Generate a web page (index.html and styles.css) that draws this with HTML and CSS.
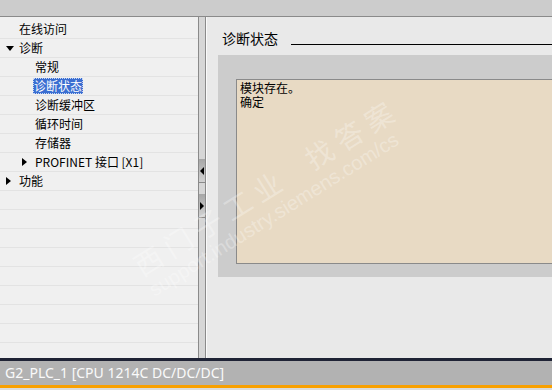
FILE: index.html
```html
<!DOCTYPE html>
<html lang="zh-cn">
<head>
    <meta charset="UTF-8">
    <title>诊断状态</title>
    <link rel="stylesheet" href="styles.css">
</head>
<body>
    <div class="topbar"></div>

    <div class="main">
        <ul class="tree">
            <li class="row lvl0"><span class="tog"></span><span class="lbl">在线访问</span></li>
            <li class="row lvl0"><span class="tog"><span class="tri-down"></span></span><span class="lbl">诊断</span></li>
            <li class="row lvl1"><span class="tog"></span><span class="lbl">常规</span></li>
            <li class="row lvl1"><span class="tog"></span><span class="lbl selected">诊断状态</span></li>
            <li class="row lvl1"><span class="tog"></span><span class="lbl">诊断缓冲区</span></li>
            <li class="row lvl1"><span class="tog"></span><span class="lbl">循环时间</span></li>
            <li class="row lvl1"><span class="tog"></span><span class="lbl">存储器</span></li>
            <li class="row lvl1"><span class="tog"><span class="tri-right"></span></span><span class="lbl">PROFINET 接口 [X1]</span></li>
            <li class="row lvl0"><span class="tog"><span class="tri-right"></span></span><span class="lbl">功能</span></li>
            <li class="row"></li>
            <li class="row"></li>
            <li class="row"></li>
            <li class="row"></li>
            <li class="row"></li>
            <li class="row"></li>
            <li class="row"></li>
            <li class="row"></li>
        </ul>

        <div class="splitter">
            <div class="split-btn"><span class="arr-left"></span></div>
            <div class="split-btn"><span class="arr-right"></span></div>
        </div>

        <div class="content">
            <div class="section-head">
                <span class="section-title">诊断状态</span>
                <div class="rule"></div>
            </div>
            <div class="status-frame">
                <div class="status-box">
                    <p>模块存在。</p>
                    <p>确定</p>
                </div>
            </div>
        </div>

        <div class="watermark">
            <div class="wm-cn">西门子工业&nbsp;&nbsp;找答案</div>
            <div class="wm-url">support.industry.siemens.com/cs</div>
        </div>
    </div>

    <div class="statusbar">
        <div class="statusbar-text">G2_PLC_1 [CPU 1214C DC/DC/DC]</div>
    </div>
</body>
</html>
```

FILE: styles.css
```css
body {
    margin: 0;
    width: 552px;
    height: 390px;
    overflow: hidden;
    font-family: "Noto Sans CJK SC", "Liberation Sans", sans-serif;
    font-size: 12px;
    color: #000;
    background: #dcdcdc;
}

.topbar {
    height: 16px;
    background: #cccccc;
    border-bottom: 1px solid #8a8a8a;
}

.main {
    position: relative;
    display: flex;
    height: 341px;
    overflow: hidden;
}

/* tree on the left */
.tree {
    list-style: none;
    margin: 0;
    padding: 3px 0 0 0;
    width: 198px;
    background: #f0f0f0;
    overflow: hidden;
}

.row {
    display: flex;
    align-items: center;
    height: 18px;
    border-bottom: 1px solid #e3e3e3;
    white-space: nowrap;
}

.lvl0 {
    padding-left: 3px;
}

.lvl1 {
    padding-left: 19px;
}

.tog {
    width: 16px;
    display: flex;
    align-items: center;
    justify-content: flex-start;
}

.tri-down {
    margin-left: 3px;
    width: 0;
    height: 0;
    border-left: 4px solid transparent;
    border-right: 4px solid transparent;
    border-top: 5px solid #000;
}

.tri-right {
    margin-left: 3px;
    width: 0;
    height: 0;
    border-top: 4px solid transparent;
    border-bottom: 4px solid transparent;
    border-left: 5px solid #000;
}

.lbl {
    line-height: 16px;
}

.selected {
    background: #3a6ed1;
    color: #fff;
    margin-left: -2px;
    padding: 0 1px;
    outline: 1px dotted #c8d6f2;
    outline-offset: -1px;
}

/* splitter */
.splitter {
    width: 6px;
    background: #d6d6d6;
    border-left: 1px solid #8a8a8a;
    border-right: 1px solid #8a8a8a;
    display: flex;
    flex-direction: column;
    padding-top: 142px;
    gap: 11px;
}

.split-btn {
    height: 23px;
    background: linear-gradient(#a6a6a6, #d2d2d2);
    border-bottom: 1px solid #8a8a8a;
    display: flex;
    align-items: center;
    justify-content: center;
}

.arr-left {
    width: 0;
    height: 0;
    border-top: 4px solid transparent;
    border-bottom: 4px solid transparent;
    border-right: 4px solid #000;
}

.arr-right {
    width: 0;
    height: 0;
    border-top: 4px solid transparent;
    border-bottom: 4px solid transparent;
    border-left: 4px solid #000;
}

/* right side */
.content {
    flex: 1;
    background: #e9e9e9;
    border-left: 1px solid #fafafa;
}

.section-head {
    display: flex;
    align-items: flex-end;
    height: 16px;
    margin-top: 13px;
    padding-left: 15px;
}

.section-title {
    font-size: 14px;
    line-height: 16px;
    padding-right: 13px;
}

.rule {
    flex: 1;
    height: 1px;
    background: #000;
    margin-bottom: 1px;
}

.status-frame {
    box-sizing: border-box;
    margin: 9px 0 0 11px;
    height: 222px;
    padding: 24px 0 13px 18px;
    background: #cccccc;
}

.status-box {
    height: 100%;
    box-sizing: border-box;
    background: #e8dac4;
    border: 1px solid #8a8a8a;
    border-right: none;
    padding: 1px 3px;
}

.status-box p {
    margin: 0;
    line-height: 14px;
}

/* faint watermark over everything */
.watermark {
    position: absolute;
    left: 127px;
    top: 236px;
    transform: rotate(-32deg);
    transform-origin: left top;
    color: rgba(255, 255, 255, 0.3);
    white-space: nowrap;
    pointer-events: none;
}

.wm-cn {
    font-size: 28px;
    letter-spacing: 7px;
    line-height: 34px;
}

.wm-url {
    font-family: "Liberation Sans", sans-serif;
    font-size: 20px;
    line-height: 22px;
}

/* status bar */
.statusbar {
    border-top: 3px solid #1f2335;
    border-bottom: 3px solid #f8a000;
    background: #b2b2b2;
    height: 24px;
}

.statusbar-text {
    font-family: "Noto Sans", "Liberation Sans", sans-serif;
    font-size: 14px;
    line-height: 24px;
    color: #fafafa;
    padding-left: 5px;
}
```
